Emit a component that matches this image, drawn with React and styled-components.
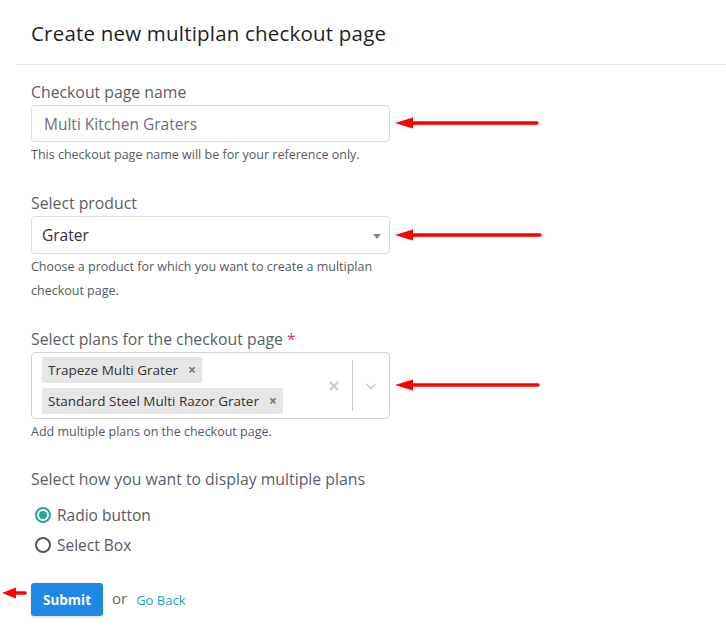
import React, { useState } from "react";
import styled, { createGlobalStyle } from "styled-components";

const GlobalStyle = createGlobalStyle`
  body {
    margin: 0;
    background: #fff;
    font-family: "Open Sans", "Liberation Sans", sans-serif;
  }
`;

const Arrow = ({ length, head = 18 }) => (
  <svg width={length} height="14" viewBox={`0 0 ${length} 14`}>
    <line x1={head - 2} y1="7" x2={length - 2} y2="7" stroke="#f00" strokeWidth="3.5" strokeLinecap="round" />
    <polygon points={`0,7 ${head},1.5 ${head},12.5`} fill="#f00" />
  </svg>
);

const App = () => {
  const [display, setDisplay] = useState("radio");

  return (
    <Page>
      <GlobalStyle />
      <Header>
        <Title>Create new multiplan checkout page</Title>
      </Header>
      <Form onSubmit={(e) => e.preventDefault()}>
        <Field>
          <Label>Checkout page name</Label>
          <Control>
            <Input defaultValue="Multi Kitchen Graters" />
            <Pointer $top={11}>
              <Arrow length={144} />
            </Pointer>
          </Control>
          <Help>This checkout page name will be for your reference only.</Help>
        </Field>

        <Field $gap={26}>
          <Label>Select product</Label>
          <Control>
            <SelectBox>
              <span>Grater</span>
              <Caret />
            </SelectBox>
            <Pointer $top={12}>
              <Arrow length={147} />
            </Pointer>
          </Control>
          <Help>Choose a product for which you want to create a multiplan checkout page.</Help>
        </Field>

        <Field $gap={26}>
          <Label>
            Select plans for the checkout page <Required>*</Required>
          </Label>
          <Control>
            <MultiBox>
              <Tags>
                <Tag>
                  Trapeze Multi Grater <TagClose>×</TagClose>
                </Tag>
                <Tag>
                  Standard Steel Multi Razor Grater <TagClose>×</TagClose>
                </Tag>
              </Tags>
              <Indicators>
                <svg width="14" height="14" viewBox="0 0 14 14">
                  <path d="M3 3 L11 11 M11 3 L3 11" stroke="#ccc" strokeWidth="2.2" />
                </svg>
                <Separator />
                <svg width="14" height="14" viewBox="0 0 14 14">
                  <path d="M2.5 5 L7 9.5 L11.5 5" stroke="#ccc" strokeWidth="1.6" fill="none" />
                </svg>
              </Indicators>
            </MultiBox>
            <Pointer $top={26}>
              <Arrow length={145} />
            </Pointer>
          </Control>
          <Help>Add multiple plans on the checkout page.</Help>
        </Field>

        <Field $gap={25}>
          <Label>Select how you want to display multiple plans</Label>
          <Options>
            <Option onClick={() => setDisplay("radio")}>
              <Radio $checked={display === "radio"} />
              Radio button
            </Option>
            <Option onClick={() => setDisplay("select")}>
              <Radio $checked={display === "select"} />
              Select Box
            </Option>
          </Options>
        </Field>

        <Actions>
          <LeftPointer>
            <Arrow length={25} head={14} />
          </LeftPointer>
          <SubmitButton type="submit">Submit</SubmitButton>
          <Or>or</Or>
          <BackLink href="#">Go Back</BackLink>
        </Actions>
      </Form>
    </Page>
  );
};

export default App;

const Page = styled.div`
  width: 726px;
  height: 632px;
  padding-left: 16px;
  box-sizing: border-box;
  overflow: hidden;
`;

const Header = styled.div`
  padding: 20px 15px 0;
  height: 65px;
  box-sizing: border-box;
  border-bottom: 1px solid #e6e6e6;
`;

const Title = styled.h1`
  margin: 0;
  font-size: 20.5px;
  line-height: 26px;
  font-weight: 500;
  color: #1f1f1f;
  letter-spacing: 0.2px;
`;

const Form = styled.form`
  padding: 17px 15px 0;
  width: 359px;
`;

const Field = styled.div`
  display: flex;
  flex-direction: column;
  margin-top: ${(p) => p.$gap || 0}px;
`;

const Label = styled.label`
  font-size: 15.8px;
  line-height: 20px;
  color: #5a5f69;
  margin-bottom: 3px;
`;

const Required = styled.span`
  color: #e0364e;
`;

const Control = styled.div`
  position: relative;
`;

const Pointer = styled.div`
  position: absolute;
  left: 364px;
  top: ${(p) => p.$top}px;
  line-height: 0;
`;

const Input = styled.input`
  width: 100%;
  height: 37px;
  box-sizing: border-box;
  border: 1px solid #dcdcdc;
  border-radius: 4px;
  padding: 0 12px;
  font-family: inherit;
  font-size: 15.5px;
  color: #6a707c;
  outline: none;
`;

const SelectBox = styled.div`
  height: 38px;
  box-sizing: border-box;
  border: 1px solid #dcdcdc;
  border-radius: 4px;
  padding: 0 10px;
  display: flex;
  align-items: center;
  justify-content: space-between;
  font-size: 15.5px;
  color: #333;
`;

const Caret = styled.span`
  width: 0;
  height: 0;
  border-left: 4px solid transparent;
  border-right: 4px solid transparent;
  border-top: 5px solid #888;
  margin-right: -2px;
  margin-top: 2px;
`;

const Help = styled.div`
  font-size: 12.5px;
  line-height: 24px;
  color: #555a62;
  margin-top: 1px;
  padding-right: 6px;
`;

const MultiBox = styled.div`
  min-height: 67px;
  box-sizing: border-box;
  border: 1px solid #d3d3d3;
  border-radius: 4px;
  display: flex;
  align-items: center;
`;

const Tags = styled.div`
  flex: 1;
  display: flex;
  flex-direction: column;
  align-items: flex-start;
  gap: 5px;
  padding: 3px 10px;
`;

const Tag = styled.div`
  background: #e6e6e6;
  border-radius: 2px;
  font-size: 13.5px;
  line-height: 26px;
  color: #333;
  padding: 0 6px;
  display: flex;
  align-items: center;
  gap: 10px;
`;

const TagClose = styled.span`
  color: #777;
  font-size: 14px;
  font-weight: 700;
`;

const Indicators = styled.div`
  display: flex;
  align-items: center;
  align-self: stretch;
  gap: 11px;
  padding: 7px 11px 7px 0;
`;

const Separator = styled.span`
  width: 1px;
  align-self: stretch;
  background: #ccc;
`;

const Options = styled.div`
  display: flex;
  flex-direction: column;
  gap: 10px;
  margin-top: 13px;
  padding-left: 4px;
`;

const Option = styled.div`
  display: flex;
  align-items: center;
  gap: 6px;
  font-size: 15.5px;
  line-height: 20px;
  color: #555a62;
  cursor: pointer;
`;

const Radio = styled.span`
  width: 16px;
  height: 16px;
  box-sizing: border-box;
  border-radius: 50%;
  border: 2px solid ${(p) => (p.$checked ? "#26a69a" : "#555")};
  display: flex;
  align-items: center;
  justify-content: center;

  &::after {
    content: "";
    width: 8px;
    height: 8px;
    border-radius: 50%;
    background: #26a69a;
    display: ${(p) => (p.$checked ? "block" : "none")};
  }
`;

const Actions = styled.div`
  position: relative;
  display: flex;
  align-items: center;
  margin-top: 28px;
`;

const LeftPointer = styled.div`
  position: absolute;
  left: -29px;
  top: 3px;
  line-height: 0;
`;

const SubmitButton = styled.button`
  width: 72px;
  height: 33px;
  border: none;
  border-radius: 3px;
  background: #1e88e5;
  color: #fff;
  font-family: inherit;
  font-size: 13.5px;
  font-weight: 700;
  box-shadow: 0 1px 3px rgba(0, 0, 0, 0.15);
  cursor: pointer;
`;

const Or = styled.span`
  margin-left: 9px;
  font-size: 15px;
  color: #666;
  margin-top: -4px;
`;

const BackLink = styled.a`
  margin-left: 9px;
  font-size: 13px;
  color: #17a5b8;
  text-decoration: none;
`;
